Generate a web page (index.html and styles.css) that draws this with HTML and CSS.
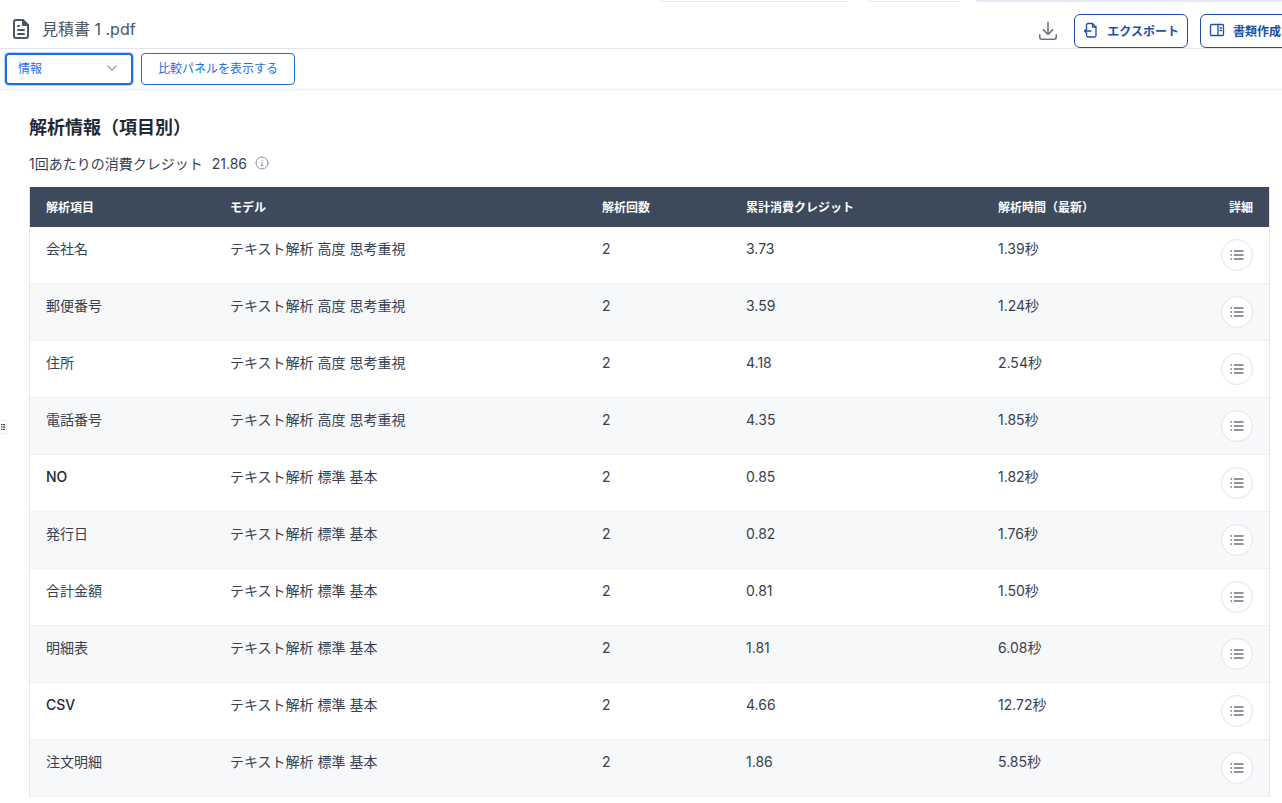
FILE: index.html
```html
<!DOCTYPE html>
<html lang="ja">
<head>
    <meta charset="utf-8">
    <title>見積書 1 .pdf</title>
    <link rel="stylesheet" href="styles.css">
</head>
<body>
    <div class="tab-strip">
        <span class="tab-edge tab-edge-one"></span>
        <span class="tab-edge tab-edge-two"></span>
        <span class="tab-edge tab-edge-three"></span>
    </div>

    <header class="file-bar">
        <svg class="file-icon" viewBox="0 0 24 24" fill="none" stroke="#4b5563" stroke-width="2" stroke-linecap="round" stroke-linejoin="round">
            <path d="M14 3H7a2 2 0 0 0-2 2v14a2 2 0 0 0 2 2h10a2 2 0 0 0 2-2V8z"/>
            <path d="M14 3v5h5" fill="#4b5563"/>
            <path d="M9 9h1M9 13h6M9 17h6"/>
        </svg>
        <span class="file-name">見積書 1 .pdf</span>
        <svg class="download-icon" viewBox="0 0 20 20" fill="none" stroke="#6b7280" stroke-width="1.4" stroke-linecap="round" stroke-linejoin="round">
            <path d="M10 2v11M5.800 9l4.200 4.200L14.200 9"/>
            <path d="M2.500 13.500v2a2 2 0 0 0 2 2h11a2 2 0 0 0 2-2v-2"/>
        </svg>
        <button class="outline-button">
            <svg class="button-icon" viewBox="0 0 16 16" fill="none" stroke="#1e4fa8" stroke-width="1.3" stroke-linecap="round" stroke-linejoin="round">
                <path d="M3.500 6V3A1.500 1.500 0 0 1 5 1.500h4.500L13 5v8.500a1.500 1.500 0 0 1-1.500 1.500H5a1.500 1.500 0 0 1-1.500-1.500V12"/>
                <path d="M9.500 1.500V5H13"/>
                <path d="M8 9H1.500M3.800 6.800 1.500 9l2.300 2.200"/>
            </svg>
            エクスポート
        </button>
        <button class="outline-button">
            <svg class="button-icon" viewBox="0 0 16 16" fill="none" stroke="#1e4fa8" stroke-width="1.3" stroke-linecap="round" stroke-linejoin="round">
                <rect x="1.500" y="2.500" width="13" height="11" rx="1"/>
                <path d="M9 2.500v11M11 6h1.500M11 8.500h1.500"/>
            </svg>
            書類作成
        </button>
    </header>

    <div class="tool-bar">
        <div class="view-select">
            <span>情報</span>
            <svg class="chevron" viewBox="0 0 12 12" fill="none" stroke="#8aa0c0" stroke-width="1.300" stroke-linecap="round" stroke-linejoin="round">
                <path d="M2 4l4 4 4-4"/>
            </svg>
        </div>
        <button class="compare-button">比較パネルを表示する</button>
    </div>

    <main class="content">
        <h1 class="section-title">解析情報（項目別）</h1>
        <div class="credit-line">
            <span>1回あたりの消費クレジット</span>
            <span>21.86</span>
            <svg class="info-icon" viewBox="0 0 14 14" fill="none" stroke="#8b93a1" stroke-width="1" stroke-linecap="round">
                <circle cx="7" cy="7" r="6"/>
                <path d="M7 6.500v3.200M6 9.700h2M7 4.200v.2"/>
            </svg>
        </div>

        <table class="info-table">
            <thead>
                <tr>
                    <th class="col-item">解析項目</th>
                    <th class="col-model">モデル</th>
                    <th class="col-count">解析回数</th>
                    <th class="col-credit">累計消費クレジット</th>
                    <th class="col-time">解析時間（最新）</th>
                    <th class="col-detail">詳細</th>
                </tr>
            </thead>
            <tbody id="info-rows"></tbody>
        </table>
    </main>

    <div class="side-handle">
        <svg viewBox="0 0 6 8" fill="#374151">
            <rect x="1" y="1" width="1.500" height="1.200"/>
            <rect x="3" y="1" width="2" height="1.200"/>
            <rect x="1" y="3.400" width="1.500" height="1.200"/>
            <rect x="3" y="3.400" width="2" height="1.200"/>
            <rect x="1" y="5.800" width="1.500" height="1.200"/>
            <rect x="3" y="5.800" width="2" height="1.200"/>
        </svg>
    </div>

    <script src="rows.js"></script>
</body>
</html>
```

FILE: styles.css
```css
html,
body {
    height: 100%;
}

body {
    margin: 0;
    overflow: hidden;
    background-color: #fff;
    color: #1f2937;
    font-family: Inter, "Noto Sans CJK JP", sans-serif;
    font-size: 14px;
    position: relative;
}

.tab-strip {
    display: flex;
    height: 2px;
    padding-left: 660px;
}

.tab-edge {
    display: block;
    height: 1px;
    border: 1px solid #e5e7eb;
    border-top: none;
    border-radius: 0 0 5px 5px;
}

.tab-edge-one {
    width: 186px;
    margin-right: 20px;
}

.tab-edge-two {
    width: 90px;
    margin-right: 16px;
}

.tab-edge-three {
    flex: 1;
    background-color: #e4e8f4;
    border-color: #e4e8f4;
}

.file-bar {
    display: flex;
    align-items: center;
    height: 34px;
    padding: 12px 0 0 9px;
    border-bottom: 1px solid #e2e4ee;
}

.file-icon {
    width: 24px;
    height: 24px;
    margin-right: 9px;
    margin-bottom: 4px;
}

.file-name {
    font-size: 16px;
    color: #4b5563;
    flex: 1;
    margin-bottom: 6px;
}

.download-icon {
    width: 22px;
    height: 22px;
    margin-right: 15px;
}

.outline-button {
    display: flex;
    align-items: center;
    flex-shrink: 0;
    gap: 8px;
    height: 34px;
    padding: 0 8px 2px;
    margin-right: 12px;
    border: 1px solid #1e4fa8;
    border-radius: 6px;
    background-color: #fff;
    color: #1e4fa8;
    font-family: inherit;
    font-size: 12px;
    font-weight: 700;
    white-space: nowrap;
}

.outline-button:last-child {
    margin-right: -8px;
}

.button-icon {
    width: 16px;
    height: 16px;
}

.tool-bar {
    display: flex;
    align-items: center;
    gap: 8px;
    height: 40px;
    padding-left: 5px;
    border-bottom: 1px solid #eceef2;
}

.view-select {
    display: flex;
    align-items: center;
    justify-content: space-between;
    box-sizing: border-box;
    width: 128px;
    height: 32px;
    padding: 0 13px 3px 11px;
    border: 2px solid #1a6fe8;
    border-radius: 4px;
    box-shadow: 0 0 0 1px #b9d3f8;
    color: #1a6fe8;
    font-size: 12px;
}

.chevron {
    width: 12px;
    height: 12px;
}

.compare-button {
    box-sizing: border-box;
    width: 154px;
    height: 32px;
    padding: 0 0 3px;
    border: 1px solid #1a6fe8;
    border-radius: 4px;
    background-color: #fff;
    color: #1a6fe8;
    font-family: inherit;
    font-size: 12px;
}

.content {
    padding: 0 12px 0 29px;
}

.section-title {
    margin: 25px 0 0;
    font-size: 18px;
    line-height: 26px;
    font-weight: 700;
    color: #1f2937;
}

.credit-line {
    display: flex;
    align-items: center;
    height: 20px;
    margin-top: 12px;
    margin-bottom: 14px;
    gap: 9px;
    font-size: 14px;
    color: #374151;
}

.info-icon {
    width: 14px;
    height: 14px;
    margin-left: -1px;
}

.info-table {
    width: 1241px;
    border-collapse: separate;
    border-spacing: 0;
    table-layout: fixed;
    border-left: 1px solid #e5e7eb;
    border-right: 1px solid #e5e7eb;
}

.info-table th {
    height: 38px;
    padding: 0 16px 2px;
    background-color: #3d4a5c;
    color: #fff;
    font-size: 12px;
    font-weight: 700;
    text-align: left;
}

.info-table td {
    padding: 12px 16px;
    height: 32px;
    line-height: 19px;
    vertical-align: top;
    border-bottom: 1px solid #eef0f4;
    font-size: 14px;
    color: #374151;
}

.info-table tbody tr:nth-child(even) td {
    background-color: #f7f8fa;
}

.col-item {
    width: 152px;
}

.col-model {
    width: 340px;
}

.col-count {
    width: 112px;
}

.col-credit {
    width: 220px;
}

.info-table th.col-detail {
    text-align: right;
}

.info-table td.col-detail {
    text-align: right;
}

.latin-label {
    font-weight: 500;
    color: #1f2937;
}

.detail-button {
    display: inline-flex;
    align-items: center;
    justify-content: center;
    box-sizing: border-box;
    width: 32px;
    height: 32px;
    padding: 0;
    border: 1px solid #dfe4ec;
    border-radius: 50%;
    background-color: #fff;
    vertical-align: top;
}

.detail-button svg {
    width: 14px;
    height: 14px;
}

.side-handle {
    position: absolute;
    left: -1px;
    top: 420px;
    box-sizing: border-box;
    width: 8px;
    height: 14px;
    border: 1px solid #e5e7eb;
    border-radius: 2px;
    background-color: #fff;
    display: flex;
    align-items: center;
    justify-content: center;
}

.side-handle svg {
    width: 6px;
    height: 8px;
}
```

FILE: rows.js
```js
var rows = [
    ["会社名", "テキスト解析 高度 思考重視", "2", "3.73", "1.39秒"],
    ["郵便番号", "テキスト解析 高度 思考重視", "2", "3.59", "1.24秒"],
    ["住所", "テキスト解析 高度 思考重視", "2", "4.18", "2.54秒"],
    ["電話番号", "テキスト解析 高度 思考重視", "2", "4.35", "1.85秒"],
    ["NO", "テキスト解析 標準 基本", "2", "0.85", "1.82秒"],
    ["発行日", "テキスト解析 標準 基本", "2", "0.82", "1.76秒"],
    ["合計金額", "テキスト解析 標準 基本", "2", "0.81", "1.50秒"],
    ["明細表", "テキスト解析 標準 基本", "2", "1.81", "6.08秒"],
    ["CSV", "テキスト解析 標準 基本", "2", "4.66", "12.72秒"],
    ["注文明細", "テキスト解析 標準 基本", "2", "1.86", "5.85秒"]
];

var listIcon = '<svg viewBox="0 0 14 14" fill="none" stroke="#6b7280" stroke-width="1.400"><path d="M0.500 3H2M0.500 7H2M0.500 11H2M4 3H13.500M4 7H13.500M4 11H13.500"/></svg>';

var html = "";
for (var i = 0; i < rows.length; i++) {
    var name = rows[i][0];
    if (/^[A-Z]+$/.test(name)) {
        name = '<span class="latin-label">' + name + "</span>";
    }
    html += "<tr><td>" + name + "</td>";
    for (var j = 1; j < rows[i].length; j++) {
        html += "<td>" + rows[i][j] + "</td>";
    }
    html += '<td class="col-detail"><button class="detail-button">' + listIcon + "</button></td></tr>";
}
document.getElementById("info-rows").innerHTML = html;
```
